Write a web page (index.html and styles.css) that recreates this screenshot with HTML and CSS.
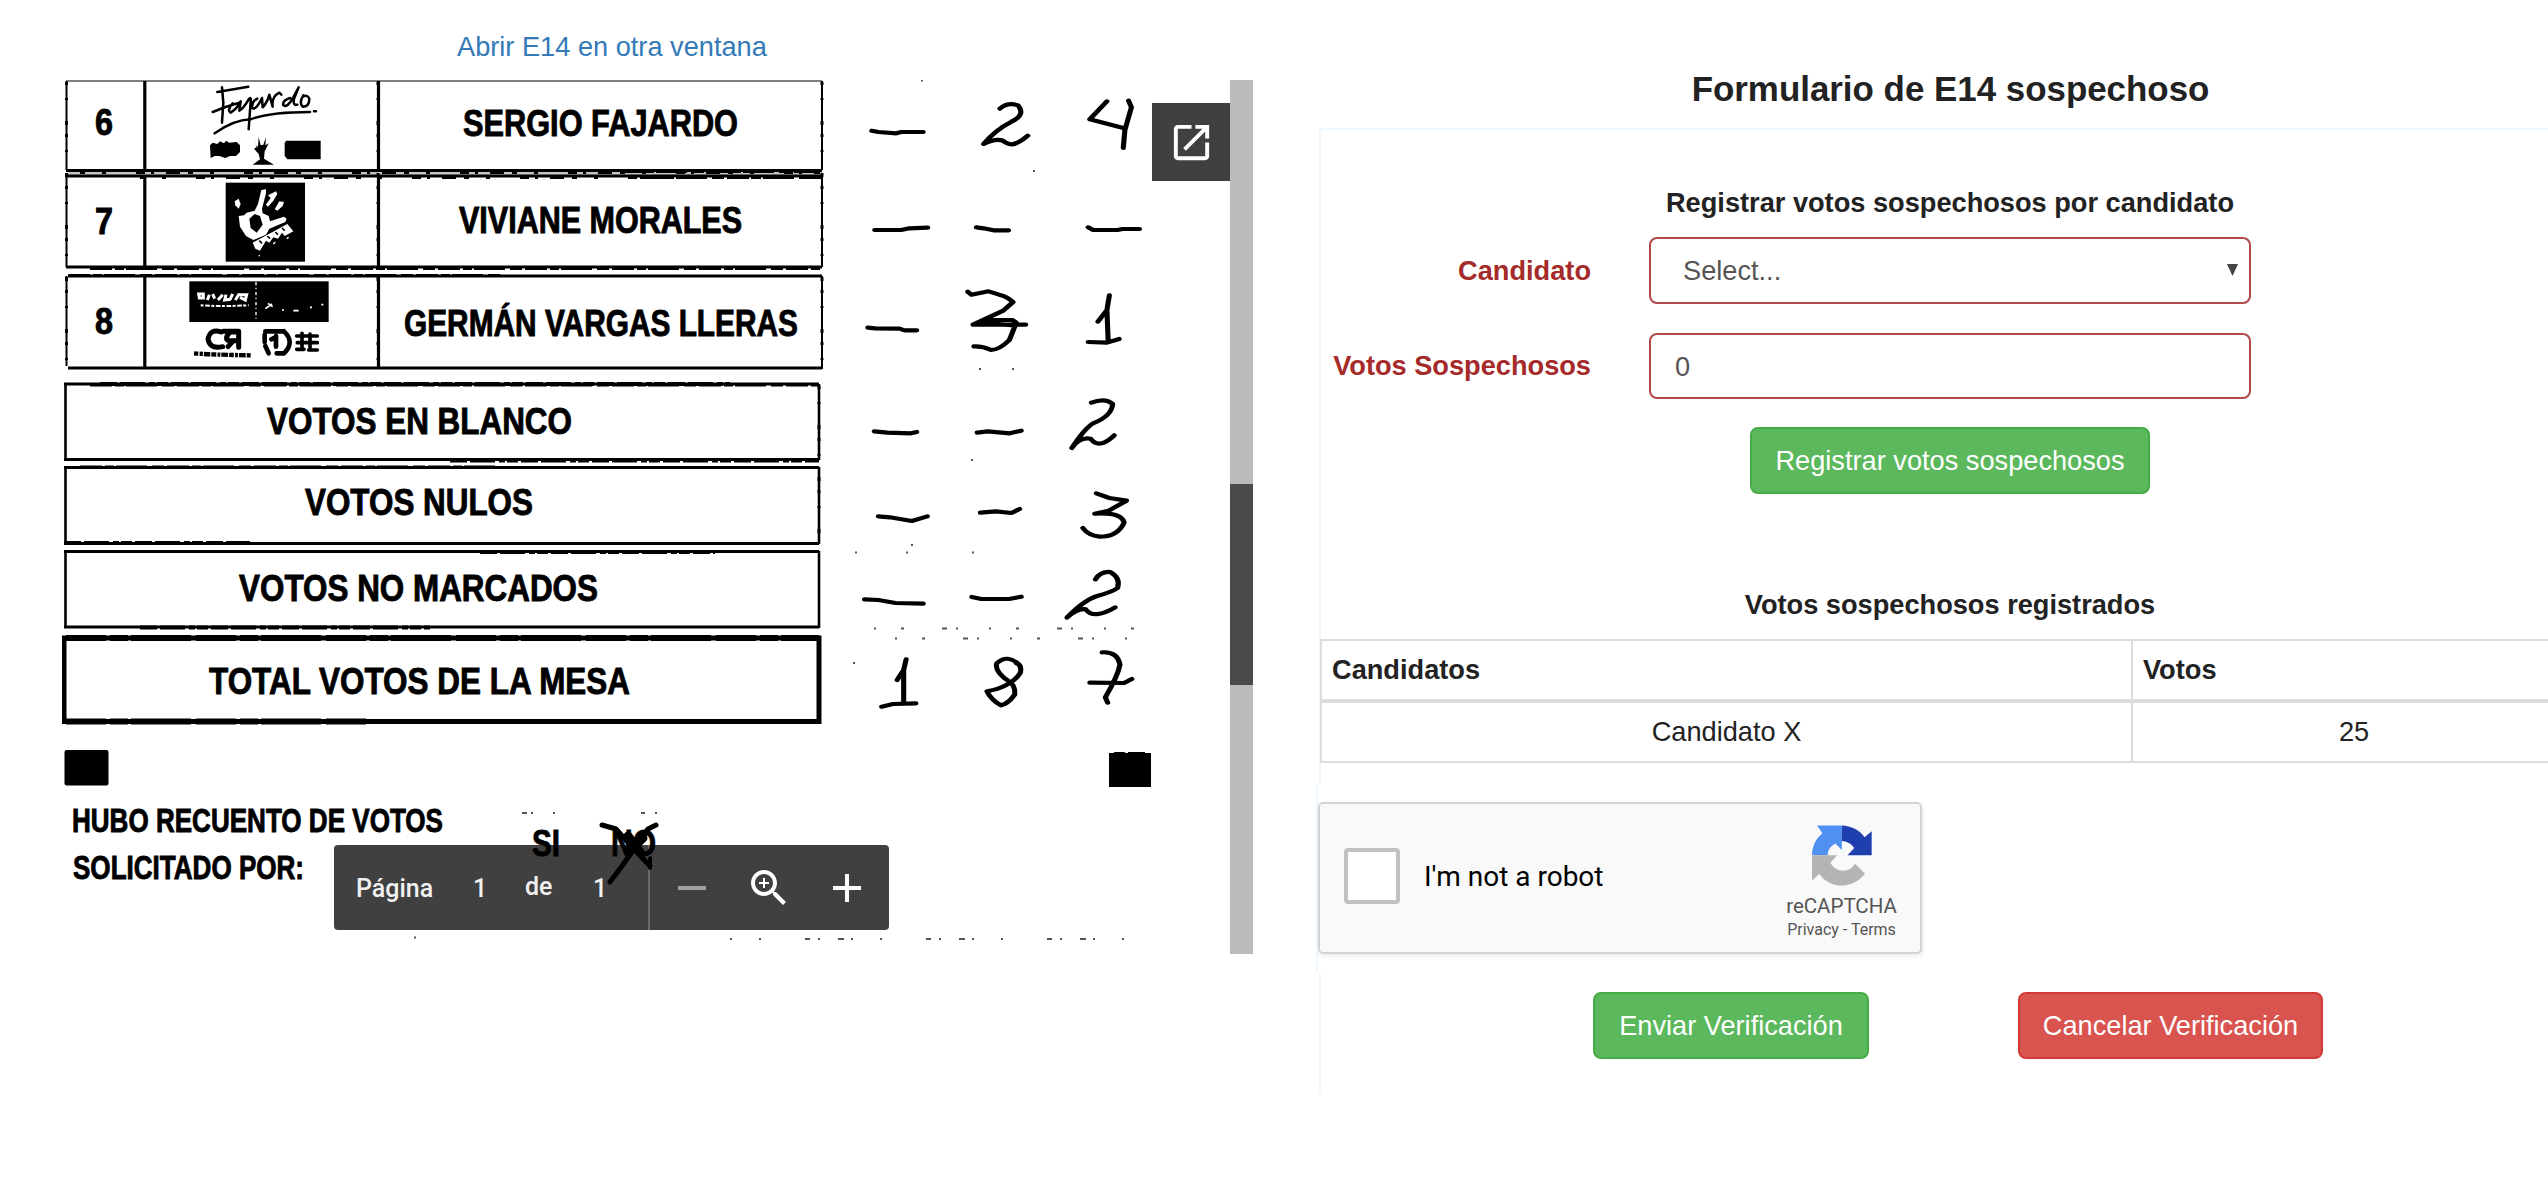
FILE: index.html
```html
<!DOCTYPE html>
<html lang="es">
<head>
<meta charset="utf-8">
<title>Formulario de E14 sospechoso</title>
<link rel="stylesheet" href="styles.css">
</head>
<body>
<main class="page">
  <section class="document">
    <a class="open-link" href="#">Abrir E14 en otra ventana</a>
    <div class="viewer">
      <svg class="scan" viewBox="62 80 1168 874" width="1168" height="874">
        <!-- candidate rows -->
        <g class="rule">
          <rect x="67" y="170" width="755" height="6" fill="#c4c6c2" stroke="none"/>
          <path stroke-width="1.5" stroke="#555" d="M66 81H822"/>
          <path d="M66 170.500H822M66 176H822M66 267H822M68 276H822M68 368H822"/>
          <path stroke-width="2" d="M66.500 81V170M66.500 176V267M66.500 276V366M822 81V170M822 176V267M822 276V369"/>
          <path stroke-width="3.200" d="M144.800 81V170M144.800 176V267M144.800 276V368M378.500 81V170M378.500 176V267M378.500 276V368"/>
          <path stroke-width="4" stroke-dasharray="5 17 4 30 9 6 3 12 14 8" d="M80 172H820M140 177H822"/>
          <path stroke-width="3" stroke-dasharray="22 3 9 2 31 5 12 3" d="M90 268.500H822M68 275.500H500M90 385H819M620 171.500H820M640 177.500H822M80 467H500"/>
          <path stroke-width="3" stroke-dasharray="3 13 2 21 4 9" d="M66.500 82V366M822 82V366M819 386V540M378 82V366"/>
        </g>
        <!-- totals rows -->
        <g class="rule">
          <path d="M64 384H819M64 459.500H819M64 467.500H819M64 543.500H819M64 551.500H819M64 627H819"/>
          <path stroke-width="2.600" d="M65.500 383V461M65.500 466V545M65.500 550V628M819 384V460M819 467V544M819 551V628"/>
          <path stroke-width="4" stroke-dasharray="17 3 25 4 6 2 11 3" d="M450 460.500H819M64 543H250M480 552H715M140 627.500H430M100 384H730"/>
          <rect x="64" y="638" width="755" height="83.500" stroke-width="5"/>
          <path stroke-width="6" stroke-dasharray="40 4 18 3 60 5" d="M66 638H819M66 721.500H370"/>
        </g>
        <!-- loose specks left by the scanner -->
        <g class="speck">
          <path stroke-dasharray="2 25 3 38 5 9 2 31" d="M874 628.500H1140M895 638.500H1135"/>
          <path stroke-dasharray="2 27 2 44 5 8 2 18 6 7" d="M730 939H1154"/>
          <path d="M921 80.500h2M1033 171h2M979 369h2M1012 369h2M971 460h2M911 545h2M855 552.500h2M906 552.500h2M972 552.500h2M853 663h2M414 937.500h2M522 813h5M531 813h2M553 813h2M641 813h4M655 813h2"/>
        </g>
        <!-- party emblems -->
        <g transform="translate(180 76) scale(.33333)">
          <g class="ink sign">
            <path d="M112 48L205 32M126 34L130 80L126 140M98 108Q140 90 178 80M158 82Q140 104 152 110Q172 98 182 76L178 104Q190 98 206 70Q214 60 212 76L206 160M232 68Q214 76 216 96Q228 104 246 66L248 94Q262 80 268 56L278 92Q274 62 298 50L304 56M330 66Q306 74 310 88Q322 96 340 64L356 34L342 68Q338 90 352 86M370 58Q356 80 368 92Q388 92 388 68Q382 54 368 62"/>
            <path d="M104 172Q160 132 212 130Q270 108 390 108M402 106h6"/>
          </g>
          <path d="M90 208L98 200L112 204L120 196L132 202L138 194L148 200L170 198L180 208L180 228L168 240L150 240L136 246L118 240L104 240L92 246Z"/>
          <path d="M222 186L228 208L234 212L236 184L242 208L250 206L258 184L256 208L266 202L254 226L252 248L282 266H218L240 250L236 234L222 218L230 214Z"/>
          <path d="M318 194H422V250H322L314 240V202Z"/>
          <rect x="137" y="320" width="238" height="237"/>
          <g fill="#fff">
            <path d="M164 376L176 368L182 384L176 398L166 388Z"/>
            <path fill-rule="evenodd" d="M176 420L192 418L200 410L224 404L234 384L244 342L258 340L258 352L246 398L248 412L266 420L270 436L312 422L320 428L316 438L268 458L258 476L220 492L198 480L180 452ZM208 428L212 456L230 470L248 446L240 420L224 414Z"/>
            <path d="M264 358L288 346L292 354L280 374L264 392L258 386L272 366Z"/>
            <path d="M284 400L298 376L312 378L308 390L292 404Z"/>
            <path d="M218 500L322 444L340 466L314 480L306 470L294 488L280 484L268 500L258 494L240 524L226 518Z"/>
            <path d="M236 538l4 2M280 504l6-6M320 488l6-4" stroke="#fff" stroke-width="4"/>
          </g>
          <path d="M238 494l8 8M262 480l8 8M286 468l8 8M306 456l8 8" stroke="#000" stroke-width="5"/>
          <rect x="28" y="616" width="418" height="122"/>
          <g fill="none" stroke="#fff" stroke-width="9">
            <path d="M56 654h14v12h-12zM82 672L88 656M98 654L104 668M114 672L128 656M138 656L134 672L150 670L158 654M166 672L176 656L200 656L196 672L180 664"/>
            <path stroke-width="6" stroke-dasharray="9 5 14 4" d="M62 688Q120 692 206 688"/>
            <path stroke-width="4" stroke-dasharray="10 7 4 9" d="M228 618V728"/>
            <path stroke-width="5" d="M256 698L276 684M264 682L278 692M306 702h6M340 704h16M390 694h6M424 686h6"/>
          </g>
          <g class="ink" stroke-width="15">
            <path d="M124 768Q90 756 84 790Q90 820 128 812M176 766V814M176 768H150Q130 790 148 794H174M144 812L158 796M130 766H176"/>
            <path stroke-width="13" stroke-linecap="butt" stroke-dasharray="14 4 9 3 20 3" d="M42 832Q90 836 212 838"/>
            <path stroke-width="14" d="M256 766H310M254 776V798M256 810L266 832M288 780V812M312 766Q346 798 312 832H290M274 790L286 784"/>
            <path stroke-width="11" d="M350 780H412M352 800H412M366 772V816M390 774V820M350 820H372M386 822H412"/>
          </g>
        </g>
        <!-- printed labels -->
        <g class="print">
          <text x="95" y="135" textLength="18" lengthAdjust="spacingAndGlyphs" font-size="36">6</text>
          <text x="95" y="234" textLength="18" lengthAdjust="spacingAndGlyphs" font-size="36">7</text>
          <text x="95" y="334" textLength="18" lengthAdjust="spacingAndGlyphs" font-size="36">8</text>
          <text x="463" y="135.500" textLength="275" lengthAdjust="spacingAndGlyphs" font-size="37">SERGIO FAJARDO</text>
          <text x="459" y="233" textLength="283" lengthAdjust="spacingAndGlyphs" font-size="36">VIVIANE MORALES</text>
          <text x="404" y="336" textLength="394" lengthAdjust="spacingAndGlyphs" font-size="36">GERMÁN VARGAS LLERAS</text>
          <text x="267" y="433.500" textLength="305" lengthAdjust="spacingAndGlyphs" font-size="37">VOTOS EN BLANCO</text>
          <text x="305" y="515" textLength="228" lengthAdjust="spacingAndGlyphs" font-size="37">VOTOS NULOS</text>
          <text x="239" y="601" textLength="359" lengthAdjust="spacingAndGlyphs" font-size="37">VOTOS NO MARCADOS</text>
          <text x="209" y="693.500" textLength="421" lengthAdjust="spacingAndGlyphs" font-size="37">TOTAL VOTOS DE LA MESA</text>
          <text x="72" y="832" textLength="371" lengthAdjust="spacingAndGlyphs" font-size="33">HUBO RECUENTO DE VOTOS</text>
          <text x="73" y="879" textLength="231" lengthAdjust="spacingAndGlyphs" font-size="33">SOLICITADO POR:</text>
          <text x="532" y="856" textLength="28" lengthAdjust="spacingAndGlyphs" font-size="37">SI</text>
          <text x="611" y="856" textLength="45" lengthAdjust="spacingAndGlyphs" font-size="37">NO</text>
        </g>
        <rect x="64.500" y="750" width="44" height="35.500" rx="2"/>
        <path d="M1109 753H1114V752H1124L1126 753H1128V752H1145V753H1151V787H1109Z"/>
        <!-- pen marks, rows 6 to 8 -->
        <g class="ink pen" transform="translate(640 20) scale(.40816 .33333)">
          <path d="M568 332L584 336L628 340L640 336H694M575 630H640L660 625L705 623M824 622L842 625L866 631H903M1098 622L1110 630H1170L1182 627H1224M558 923L576 925L636 926L648 931H678"/>
          <path d="M882 266Q900 246 926 256Q946 284 910 305Q870 330 842 372Q880 350 896 368Q916 384 950 347"/>
          <path d="M1144 244L1102 298L1184 324M1197 242L1204 262L1188 330L1184 384"/>
          <path d="M803 815L812 824L854 814L880 824Q900 830 914 846L890 872L816 914H945M850 900H912L922 908L905 960Q880 990 860 990Q840 978 818 979M830 908L918 916"/>
          <path d="M1150 826L1144 870L1122 905M1144 870L1147 962M1098 966L1144 968L1174 957"/>
        </g>
        <!-- pen marks, totals -->
        <g class="ink pen" transform="translate(640 360) scale(.40816 .33333)">
          <path d="M574 214L606 218L664 220L678 216M826 218L852 214L906 220L934 212M584 469L612 472L666 483L704 469M834 458L872 454L910 459L930 447M550 718L584 720L626 729L694 731M813 711L836 717H904L934 710"/>
          <path d="M1106 128Q1140 112 1158 132Q1156 168 1110 190Q1090 204 1058 264Q1076 230 1104 236Q1124 270 1162 226"/>
          <path d="M1118 400L1150 414L1192 422L1148 452L1114 461Q1180 456 1186 488Q1170 530 1126 530Q1098 526 1085 504"/>
          <path d="M1116 658Q1128 634 1152 636Q1178 654 1170 684Q1156 696 1120 708Q1088 720 1046 773Q1072 744 1092 748Q1112 780 1164 742"/>
          <path d="M652 898L646 930L630 960M646 930V1030M592 1040L620 1032L676 1030"/>
          <path d="M930 915Q900 880 874 910Q868 936 904 964Q920 976 918 1004Q900 1034 884 1036Q860 1020 850 994Q910 980 932 938Q936 914 922 910"/>
          <path d="M1132 877Q1170 874 1176 914Q1170 950 1140 1012L1146 1028M1102 968L1186 969L1205 957"/>
        </g>
        <!-- crossed-out answer -->
        <path class="ink" stroke-width="5" d="M602 825L616 829L630 845L650 866M656 825L648 829L634 849L622 866L610 882"/>
        <path class="ink" stroke-width="9" d="M628 836L640 852M643 838L628 852"/>
        <path class="ink" stroke-width="4" d="M650 858V868"/>
      </svg>
      <div class="scrollbar"><div class="thumb"></div></div>
      <button class="pop-out" aria-label="Abrir">
        <svg viewBox="0 0 24 24" width="47" height="47" fill="#fff"><path d="M19 19H5V5h7V3H5c-1.110 0-2 .9-2 2v14c0 1.100.89 2 2 2h14c1.100 0 2-.9 2-2v-7h-2v7zM14 3v2h3.590l-9.830 9.830 1.410 1.410L19 6.410V10h2V3h-7z"/></svg>
      </button>
      <div class="toolbar">
        <span class="word">Página</span><span class="current">1</span><span class="of">de</span><span class="total">1</span>
        <span class="divider"></span>
        <svg class="minus" viewBox="0 0 24 24" width="48" height="48" fill="#a0a0a0"><path d="M5 11h14v2H5z"/></svg>
        <svg class="lens" viewBox="0 0 24 24" width="48" height="48" fill="#fff"><path d="M15.500 14h-.79l-.28-.27C15.410 12.590 16 11.110 16 9.500 16 5.910 13.090 3 9.500 3S3 5.910 3 9.500 5.910 16 9.500 16c1.610 0 3.090-.59 4.230-1.570l.27.28v.79l5 4.990L20.490 19l-4.990-5zm-6 0C7.010 14 5 11.990 5 9.500S7.010 5 9.500 5 14 7.010 14 9.500 11.990 14 9.500 14zM9 7h1v2h2v1h-2v2H9v-2H7V9h2z"/></svg>
        <svg class="plus" viewBox="0 0 24 24" width="48" height="48" fill="#fff"><path d="M19 13h-6v6h-2v-6H5v-2h6V5h2v6h6v2z"/></svg>
      </div>
    </div>
  </section>

  <section class="form-side">
    <h1 class="title">Formulario de E14 sospechoso</h1>
    <div class="panel">
      <h2 class="subtitle">Registrar votos sospechosos por candidato</h2>
      <form class="fields">
        <label class="label" for="cand">Candidato</label>
        <div class="select-wrap">
          <select class="control select" id="cand"><option>Select...</option></select>
          <svg class="caret" viewBox="0 0 12 12" width="11" height="12" preserveAspectRatio="none"><path d="M0 0H12L6 12Z" fill="#444"/></svg>
        </div>
        <label class="label" for="votos">Votos Sospechosos</label>
        <input class="control" id="votos" value="0">
      </form>
      <button class="btn success register">Registrar votos sospechosos</button>
      <h2 class="subtitle registered">Votos sospechosos registrados</h2>
      <table class="votes">
        <colgroup><col class="col-name"><col></colgroup>
        <thead><tr><th>Candidatos</th><th>Votos</th></tr></thead>
        <tbody><tr><td>Candidato X</td><td>25</td></tr></tbody>
      </table>
      <div class="captcha-row">
        <div class="captcha">
          <span class="checkbox"></span>
          <span class="robot">I'm not a robot</span>
          <div class="brand">
            <svg viewBox="97 48 179 181" width="60" height="61">
              <path fill="#4f90f2" d="M112 49H186V122L167 103C150 112 144 124 144 138H97C97 112 108 88 128 72Z"/>
              <path fill="#1f3fae" d="M186 49C214 50 238 62 254 84L275 66V138H203L223 116C214 102 200 96 186 95Z"/>
              <path fill="#b4b4b4" d="M97 138H172L152 160C170 192 208 190 226 163L255 193C218 240 150 240 119 193L97 213Z"/>
            </svg>
            <span class="brand-name">reCAPTCHA</span>
            <span class="brand-links">Privacy - Terms</span>
          </div>
        </div>
      </div>
      <div class="actions">
        <button class="btn success send">Enviar Verificación</button>
        <button class="btn danger cancel">Cancelar Verificación</button>
      </div>
    </div>
  </section>
</main>
</body>
</html>
```

FILE: styles.css
```css
* { box-sizing: border-box; }

body {
  margin: 0;
  background: #fff;
  color: #222;
  font: 27.2px/30px "Liberation Sans", Arial, sans-serif;
  overflow: hidden;
}

.page {
  display: grid;
  grid-template-columns: 1319px 1260px;
  width: 2548px;
  height: 1190px;
  overflow: hidden;
}

/* Document viewer */
.document { padding: 32px 0 0 62px; }

.open-link {
  display: block;
  margin-left: 395px;
  margin-bottom: 18px;
  color: #337ab7;
  text-decoration: none;
}

.viewer {
  position: relative;
  display: flex;
  width: 1191px;
  height: 874px;
}

.scan { position: relative; z-index: 1; display: block; }
.rule { fill: none; stroke: #000; stroke-width: 3; }
.speck { stroke: #555; stroke-width: 2; }
.ink { fill: none; stroke: #000; stroke-linecap: round; stroke-linejoin: round; }
.sign { stroke-width: 7.5; }
.pen { stroke-width: 12.5; }
.print {
  font-family: "Liberation Sans", Arial, sans-serif;
  font-weight: bold;
  stroke: #000;
  stroke-width: .9;
}

.scrollbar { width: 23px; padding-top: 404px; background: #bbb; }
.thumb { height: 201px; background: #4a4a4a; }

.pop-out {
  position: absolute;
  z-index: 2;
  top: 23px;
  right: 23px;
  width: 78px;
  height: 78px;
  display: grid;
  place-items: center;
  padding: 0;
  border: 0;
  background: #404040;
}

.toolbar {
  position: absolute;
  left: 272px;
  bottom: 24px;
  display: flex;
  align-items: center;
  width: 555px;
  height: 85px;
  padding-left: 22px;
  border-radius: 4px;
  background: #404040;
  color: #f1f1f1;
  font: 500 25px/30px Roboto, sans-serif;
}
.word, .current, .total { padding-top: 2px; }
.word { width: 117px; }
.current { width: 52px; }
.of { width: 68px; padding-bottom: 1px; }
.total { width: 55px; }
.divider { width: 2px; height: 85px; background: #6b6b6b; }
.minus { margin-left: 18px; }
.lens { margin-left: 29px; }
.plus { margin-left: 30px; }

/* Form */
.title {
  margin: 69px 0 20px 3px;
  text-align: center;
  font-size: 34.900px;
  line-height: 39px;
}

.panel {
  height: 964px;
  padding-top: 58px;
  border: 2px solid #f0f8ff;
  border-width: 2px 0 0 2px;
}

.subtitle {
  margin: 0;
  text-align: center;
  font-size: 27.200px;
  line-height: 30px;
}

.fields {
  display: grid;
  grid-template-columns: 270px 602px;
  grid-auto-rows: 66.500px;
  gap: 29px 58px;
  align-items: center;
  margin-top: 19px;
}

.label {
  padding-top: 1px;
  color: #a52a2a;
  font-weight: bold;
  text-align: right;
  white-space: nowrap;
}

.control {
  width: 100%;
  height: 66.500px;
  padding: 2px 24px 0;
  border: 2px solid #b04a4a;
  border-radius: 8px;
  background: #fff;
  color: #555;
  font: inherit;
}
.select-wrap { position: relative; }
.select { display: block; padding-left: 32px; appearance: none; }
.caret { position: absolute; right: 13px; top: 27px; }

.btn {
  height: 66.500px;
  padding: 2px 0 0;
  border: 2px solid;
  border-radius: 8px;
  color: #fff;
  font: inherit;
}
.success { background: #5cb85c; border-color: #45ab45; }
.danger { background: #d9534f; border-color: #d43a35; }

.register { display: block; width: 400px; margin: 28px auto 0; }
.registered { margin-top: 96.500px; }

.votes {
  width: 1257px;
  margin: 18.500px 0 0 -1px;
  border-collapse: collapse;
  table-layout: fixed;
}
.col-name { width: 811px; }
.votes th, .votes td { height: 61px; padding: 1px 10px 0; border: 2px solid #ddd; text-align: center; }
.votes th { text-align: left; border-bottom-width: 4px; }

.captcha-row {
  margin: 21px 0 0 -5px;
  height: 189px;
  padding-top: 18px;
  border-left: 2px solid #f0f8ff;
  background: #fff;
}

.captcha {
  display: flex;
  align-items: center;
  width: 604px;
  height: 152px;
  padding: 0 25px 0 24px;
  border: 2px solid #d3d3d3;
  border-radius: 5px;
  background: #f9f9f9;
  box-shadow: 1px 2px 4px rgba(0, 0, 0, .08);
  font-family: Roboto, sans-serif;
}
.checkbox { width: 56px; height: 56px; margin-top: -3px; border: 4px solid #c1c1c1; border-radius: 4px; background: #fff; }
.robot { margin: -2px 0 0 24px; color: #000; font-size: 28px; }
.brand {
  display: flex;
  flex-direction: column;
  align-items: center;
  width: 107px;
  margin: 9px 0 0 auto;
  color: #555;
  white-space: nowrap;
}
.brand-name { margin-top: 7px; font-size: 20.500px; line-height: 26px; }
.brand-links { font-size: 16px; line-height: 21px; }

.actions { display: flex; margin-top: 19.500px; }
.send { width: 276px; margin-left: 272px; }
.cancel { width: 305px; margin-left: 149px; }
```
